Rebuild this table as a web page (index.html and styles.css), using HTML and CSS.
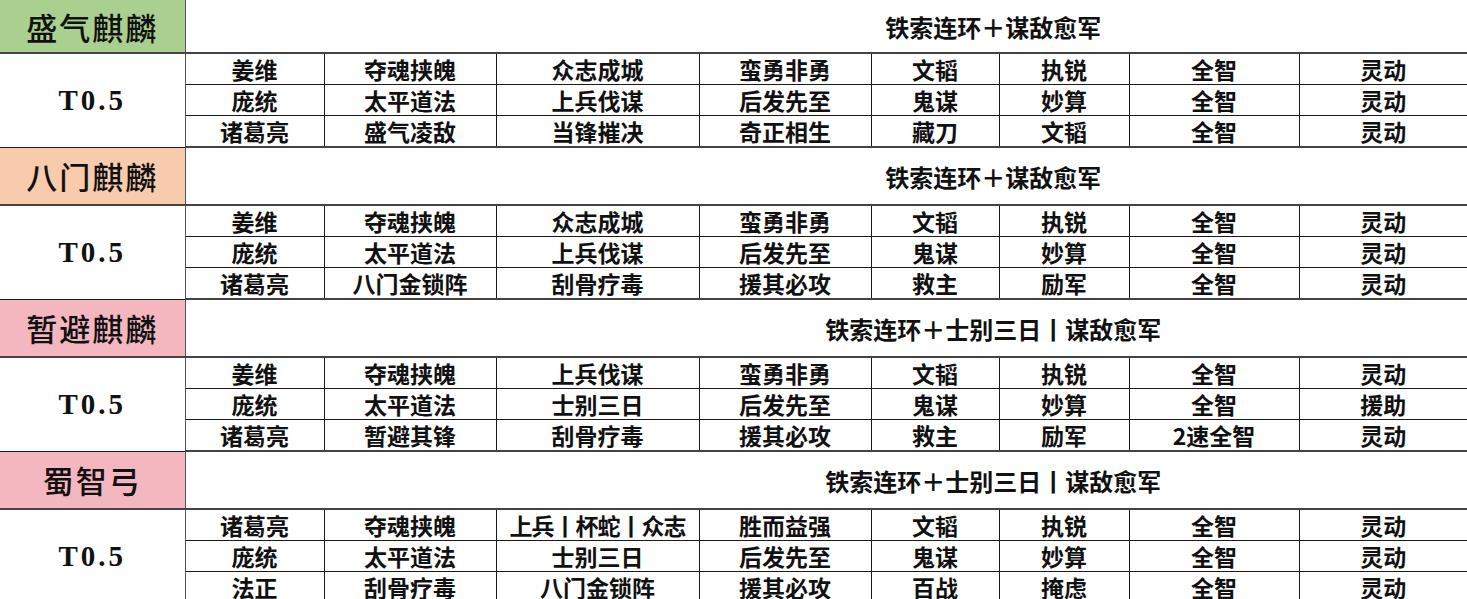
FILE: index.html
```html
<!DOCTYPE html>
<html lang="zh-CN">
<head>
<meta charset="utf-8">
<title>阵容表</title>
<link rel="stylesheet" href="styles.css">
</head>
<body>
<table class="sheet">
  <colgroup>
    <col class="c0"><col class="c1"><col class="c2"><col class="c3"><col class="c4"><col class="c5"><col class="c6"><col class="c7"><col class="c8">
  </colgroup>
  <tbody>
    <tr class="head first">
      <td class="label green">盛气麒麟</td>
      <td class="combo" colspan="8">铁索连环＋谋敌愈军</td>
    </tr>
    <tr class="row">
      <td class="tier" rowspan="3">T0.5</td>
      <td>姜维</td><td>夺魂挟魄</td><td>众志成城</td><td>蛮勇非勇</td><td>文韬</td><td>执锐</td><td>全智</td><td>灵动</td>
    </tr>
    <tr class="row">
      <td>庞统</td><td>太平道法</td><td>上兵伐谋</td><td>后发先至</td><td>鬼谋</td><td>妙算</td><td>全智</td><td>灵动</td>
    </tr>
    <tr class="row last">
      <td>诸葛亮</td><td>盛气凌敌</td><td>当锋摧决</td><td>奇正相生</td><td>藏刀</td><td>文韬</td><td>全智</td><td>灵动</td>
    </tr>

    <tr class="head">
      <td class="label peach">八门麒麟</td>
      <td class="combo" colspan="8">铁索连环＋谋敌愈军</td>
    </tr>
    <tr class="row">
      <td class="tier" rowspan="3">T0.5</td>
      <td>姜维</td><td>夺魂挟魄</td><td>众志成城</td><td>蛮勇非勇</td><td>文韬</td><td>执锐</td><td>全智</td><td>灵动</td>
    </tr>
    <tr class="row">
      <td>庞统</td><td>太平道法</td><td>上兵伐谋</td><td>后发先至</td><td>鬼谋</td><td>妙算</td><td>全智</td><td>灵动</td>
    </tr>
    <tr class="row last">
      <td>诸葛亮</td><td>八门金锁阵</td><td>刮骨疗毒</td><td>援其必攻</td><td>救主</td><td>励军</td><td>全智</td><td>灵动</td>
    </tr>

    <tr class="head">
      <td class="label pink">暂避麒麟</td>
      <td class="combo" colspan="8">铁索连环＋士别三日丨谋敌愈军</td>
    </tr>
    <tr class="row">
      <td class="tier" rowspan="3">T0.5</td>
      <td>姜维</td><td>夺魂挟魄</td><td>上兵伐谋</td><td>蛮勇非勇</td><td>文韬</td><td>执锐</td><td>全智</td><td>灵动</td>
    </tr>
    <tr class="row">
      <td>庞统</td><td>太平道法</td><td>士别三日</td><td>后发先至</td><td>鬼谋</td><td>妙算</td><td>全智</td><td>援助</td>
    </tr>
    <tr class="row last">
      <td>诸葛亮</td><td>暂避其锋</td><td>刮骨疗毒</td><td>援其必攻</td><td>救主</td><td>励军</td><td>2速全智</td><td>灵动</td>
    </tr>

    <tr class="head">
      <td class="label pink">蜀智弓</td>
      <td class="combo" colspan="8">铁索连环＋士别三日丨谋敌愈军</td>
    </tr>
    <tr class="row">
      <td class="tier" rowspan="3">T0.5</td>
      <td>诸葛亮</td><td>夺魂挟魄</td><td class="tight">上兵丨杯蛇丨众志</td><td>胜而益强</td><td>文韬</td><td>执锐</td><td>全智</td><td>灵动</td>
    </tr>
    <tr class="row">
      <td>庞统</td><td>太平道法</td><td>士别三日</td><td>后发先至</td><td>鬼谋</td><td>妙算</td><td>全智</td><td>灵动</td>
    </tr>
    <tr class="row last">
      <td>法正</td><td>刮骨疗毒</td><td>八门金锁阵</td><td>援其必攻</td><td>百战</td><td>掩虑</td><td>全智</td><td>灵动</td>
    </tr>
  </tbody>
</table>
</body>
</html>
```

FILE: styles.css
```css
html, body {
  margin: 0;
  padding: 0;
  background: #ffffff;
}

body {
  font-family: "Noto Sans CJK SC", "Liberation Serif", serif;
  color: #111;
  overflow: hidden;
}

.sheet {
  border-collapse: collapse;
  table-layout: fixed;
  width: 1467px;
}

.c0 { width: 185px; }
.c1 { width: 139px; }
.c2 { width: 172px; }
.c3 { width: 203px; }
.c4 { width: 172px; }
.c5 { width: 128px; }
.c6 { width: 130px; }
.c7 { width: 170px; }
.c8 { width: 168px; }

.sheet td {
  padding: 0;
  text-align: center;
  vertical-align: middle;
  white-space: nowrap;
  overflow: hidden;
}

.row td {
  height: 30px;
  font-size: 23px;
  line-height: 30px;
  font-weight: 700;
  border: 1px solid #1a1a1a;
}

.row td:last-child {
  border-right: none;
}

.row.last td {
  border-bottom: 2px solid #444;
}

.head td {
  height: 56px;
  border-bottom: 2px solid #444;
}

.head.first td {
  height: 52px;
}

.label {
  font-size: 31px;
  font-weight: 500;
  letter-spacing: 2px;
  border-right: 1px solid #555;
}

.green { background: #a9d08e; }
.peach { background: #f8cbad; }
.pink  { background: #f4b6bf; }

.combo {
  font-size: 24px;
  font-weight: 700;
  padding-left: 334px !important;
  text-align: center;
}

.sheet td.tier {
  font-family: "Liberation Serif", serif;
  font-size: 29px;
  font-weight: 700;
  letter-spacing: 3px;
  border-left: none;
  border-right: 1px solid #555;
}

.tight {
  letter-spacing: -1px;
}
```
